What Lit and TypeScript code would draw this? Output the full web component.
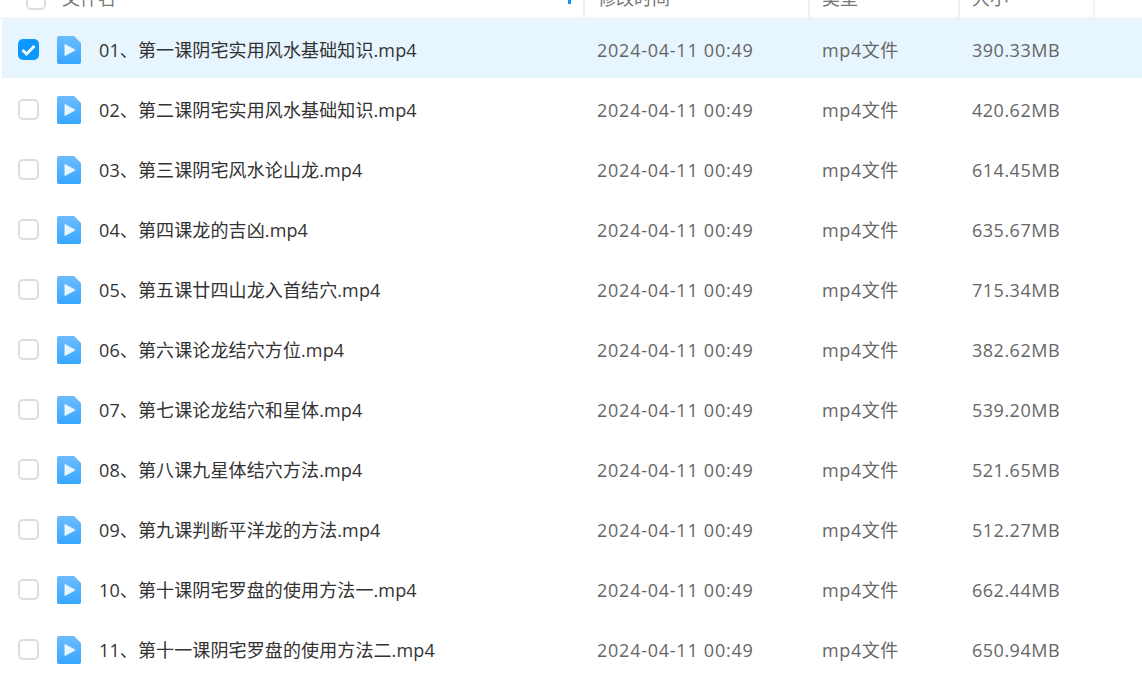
import { LitElement, html, css, svg } from "lit";
import { customElement } from "lit/decorators.js";

const rows: [string, string][] = [
  ["01、第一课阴宅实用风水基础知识.mp4", "390.33MB"],
  ["02、第二课阴宅实用风水基础知识.mp4", "420.62MB"],
  ["03、第三课阴宅风水论山龙.mp4", "614.45MB"],
  ["04、第四课龙的吉凶.mp4", "635.67MB"],
  ["05、第五课廿四山龙入首结穴.mp4", "715.34MB"],
  ["06、第六课论龙结穴方位.mp4", "382.62MB"],
  ["07、第七课论龙结穴和星体.mp4", "539.20MB"],
  ["08、第八课九星体结穴方法.mp4", "521.65MB"],
  ["09、第九课判断平洋龙的方法.mp4", "512.27MB"],
  ["10、第十课阴宅罗盘的使用方法一.mp4", "662.44MB"],
  ["11、第十一课阴宅罗盘的使用方法二.mp4", "650.94MB"],
];

const fileIcon = svg`<svg class="file" width="24" height="28" viewBox="0 0 24 28">
  <defs><linearGradient id="g" x1="0" y1="0" x2="0" y2="1"><stop offset="0" stop-color="#6cbcff"/><stop offset="1" stop-color="#38a6ff"/></linearGradient></defs>
  <path d="M2 0H17L24 7V26a2 2 0 0 1-2 2H2a2 2 0 0 1-2-2V2a2 2 0 0 1 2-2Z" fill="url(#g)"/>
  <path d="M8 8.5 18 14 8 19.5Z" fill="#e9f5ff" stroke="#e9f5ff" stroke-width="1" stroke-linejoin="round"/>
</svg>`;

@customElement("app-root")
export class AppRoot extends LitElement {
  static styles = css`
    :host { display: block; width: 1142px; height: 685px; overflow: hidden; background: #fff;
      font-family: "Open Sans", "Noto Sans CJK SC", sans-serif; font-size: 18px; }
    .head { display: flex; height: 19px; overflow: hidden; align-items: flex-end; box-sizing: border-box; }
    .hcell { box-sizing: border-box; height: 40px; flex: none; border-right: 2px solid #f0f0f0; border-bottom: 2px solid #f4f4f4;
      color: #777; display: flex; align-items: center; line-height: 40px; position: relative; }
    .h-name { width: 585px; padding-left: 62px; }
    .h-time { width: 225px; padding-left: 13px; }
    .h-type { width: 150px; padding-left: 12px; }
    .h-size { width: 135px; padding-left: 12px; }
    .h-rest { flex: 1; height: 40px; box-sizing: border-box; border-bottom: 2px solid #f4f4f4; }
    .box0 { position: absolute; left: 26px; top: 11px; width: 20px; height: 20px; box-sizing: border-box; border: 2px solid #ddd; border-radius: 5px; }
    .sort { position: absolute; left: 568px; top: 21px; width: 3px; height: 4px; background: #0d98ff; }
    .row { display: flex; align-items: center; height: 60px; box-sizing: border-box; padding-top: 1px; }
    .row.sel { background: #e7f5fe; height: 59px; margin: 0 0 1px 2px; padding-top: 2px; }
    .row.sel .check { margin-left: 16px; }
    .check { flex: none; width: 21px; height: 21px; box-sizing: border-box; margin-left: 18px; border: 2px solid #ddd; border-radius: 5px; background: #fff; }
    .check.on { background: #0d98ff; border: none; display: flex; align-items: center; justify-content: center; }
    .file { flex: none; margin-left: 18px; }
    .name { flex: none; width: 498px; margin: 0 0 2px 18px; color: #333; white-space: nowrap; letter-spacing: .12px; }
    .time { flex: none; width: 225px; color: #666; white-space: nowrap; letter-spacing: .75px; }
    .type { flex: none; width: 150px; margin-bottom: 2px; color: #666; white-space: nowrap; letter-spacing: .6px; }
    .size { flex: none; color: #666; white-space: nowrap; letter-spacing: .5px; }
  `;

  render() {
    return html`
      <div class="head">
        <div class="hcell h-name"><span class="box0"></span>文件名<span class="sort"></span></div>
        <div class="hcell h-time">修改时间</div>
        <div class="hcell h-type">类型</div>
        <div class="hcell h-size">大小</div>
        <div class="h-rest"></div>
      </div>
      ${rows.map(([n, s], i) => html`
        <div class="row ${i === 0 ? "sel" : ""}">
          ${i === 0
            ? html`<span class="check on"><svg width="15" height="12" viewBox="0 0 15 12"><path d="M1.5 6 5.5 10 13.5 2" fill="none" stroke="#fff" stroke-width="2.8"/></svg></span>`
            : html`<span class="check"></span>`}
          ${fileIcon}
          <span class="name">${n}</span>
          <span class="time">2024-04-11 00:49</span>
          <span class="type">mp4文件</span>
          <span class="size">${s}</span>
        </div>`)}
    `;
  }
}
